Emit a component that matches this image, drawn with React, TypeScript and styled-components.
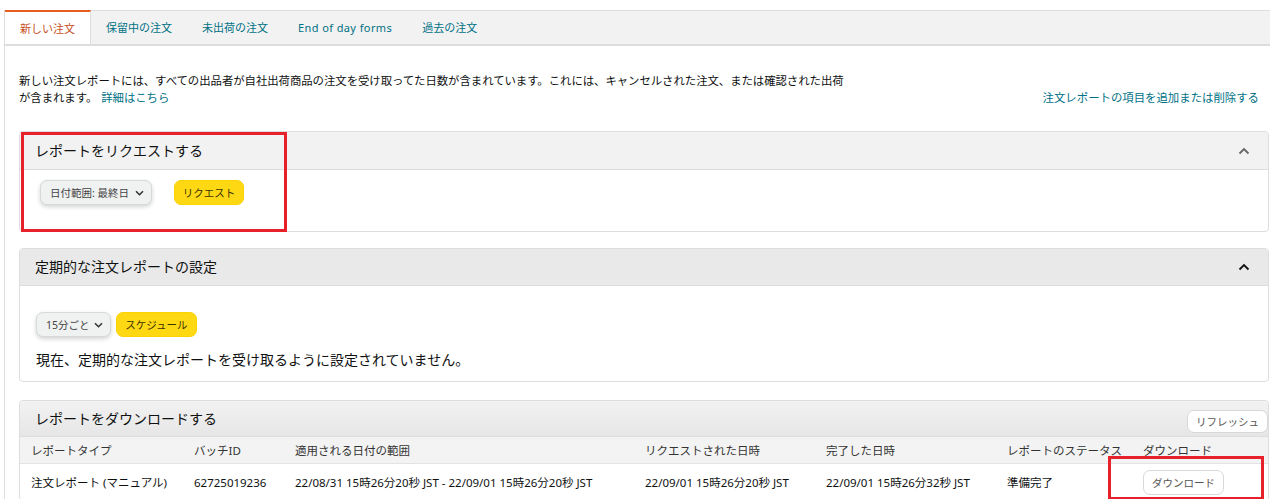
import React from "react";
import styled, { createGlobalStyle } from "styled-components";

const Global = createGlobalStyle`
  html, body { margin: 0; padding: 0; background: #fff; }
  body {
    font-family: "Noto Sans", "Noto Sans CJK JP", sans-serif;
    color: #0f1111;
  }
  * { box-sizing: border-box; }
`;

const Page = styled.div`
  padding: 10px 0 0 4px;
  height: 499px;
  overflow: hidden;
`;

const Frame = styled.div`
  border-left: 1px solid #dddddd;
  height: 100%;
`;

const TabBar = styled.div`
  display: flex;
  height: 36px;
  background: #f2f2f2;
  border-top: 1px solid #dddddd;
  border-bottom: 2px solid #dddddd;
`;

const Tab = styled.div<{ $active?: boolean; $latin?: boolean }>`
  display: flex;
  align-items: center;
  padding: 0 15px;
  margin-top: -1px;
  font-size: 11px;
  line-height: 1;
  letter-spacing: ${(p) => (p.$latin ? "0.4px" : "0")};
  color: ${(p) => (p.$active ? "#c7511f" : "#007185")};
  background: ${(p) => (p.$active ? "#ffffff" : "transparent")};
  border-top: ${(p) => (p.$active ? "2px solid #e35e1f" : "1px solid transparent")};
  border-right: ${(p) => (p.$active ? "1px solid #dddddd" : "none")};
`;

const Content = styled.div`
  padding: 26px 1px 0 14px;
`;

const Intro = styled.div`
  display: flex;
  justify-content: space-between;
  align-items: flex-end;
  margin-bottom: 25px;
`;

const IntroText = styled.p`
  margin: 0;
  font-size: 11.4px;
  line-height: 17px;
  letter-spacing: -0.05px;
`;

const Link = styled.a`
  color: #007185;
  text-decoration: none;
  margin-left: 4px;
`;

const SideLink = styled.a`
  color: #007185;
  text-decoration: none;
  font-size: 11.4px;
  line-height: 17px;
  margin-right: 10px;
`;

const Panel = styled.section<{ $gap: number }>`
  position: relative;
  border: 1px solid #dddddd;
  border-radius: 4px;
  margin-bottom: ${(p) => p.$gap}px;
`;

const PanelHead = styled.div<{ $bg: string; $h: number }>`
  display: flex;
  align-items: center;
  justify-content: space-between;
  height: ${(p) => p.$h}px;
  padding: 0 18px 0 15px;
  background: ${(p) => p.$bg};
  border-bottom: 1px solid #dddddd;
  border-radius: 4px 4px 0 0;
`;

const PanelTitle = styled.h3`
  margin: 0;
  font-size: 14px;
  font-weight: 400;
  line-height: 20px;
  color: #0f1111;
`;

const PanelBody = styled.div<{ $pad: string }>`
  padding: ${(p) => p.$pad};
`;

const Controls = styled.div<{ $gap: number }>`
  display: flex;
  align-items: center;
  gap: ${(p) => p.$gap}px;
`;

const Select = styled.div<{ $w: number }>`
  display: flex;
  align-items: center;
  justify-content: space-between;
  width: ${(p) => p.$w}px;
  height: 25px;
  padding: 0 7px 0 9px;
  background: #f0f2f2;
  border: 1px solid #d5d9d9;
  border-radius: 7px;
  box-shadow: 0 2px 4px rgba(15, 17, 17, 0.18);
  font-size: 10.5px;
  color: #444;
`;

const YellowButton = styled.div<{ $w: number }>`
  display: flex;
  align-items: center;
  justify-content: center;
  width: ${(p) => p.$w}px;
  height: 25px;
  background: #ffd814;
  border: 1px solid #fcd200;
  border-radius: 7px;
  font-size: 10.5px;
  color: #3a3200;
`;

const WhiteButton = styled.div<{ $w: number; $h: number }>`
  display: flex;
  align-items: center;
  justify-content: center;
  width: ${(p) => p.$w}px;
  height: ${(p) => p.$h}px;
  background: #ffffff;
  border: 1px solid #d5d9d9;
  border-radius: 7px;
  font-size: 10.5px;
  color: #555;
`;

const RefreshButton = styled(WhiteButton)`
  align-self: flex-end;
  margin: 0 -18px 3px 0;
`;

const Notice = styled.p`
  margin: 13px 0 0;
  font-size: 14px;
  line-height: 20px;
`;

const Grid = styled.div`
  display: grid;
  grid-template-columns: 163px 101px 350px 181px 181px 136px 1fr;
  padding-left: 11px;
`;

const HeadRow = styled(Grid)`
  height: 27px;
  align-items: center;
  background: #f3f3f3;
  border-bottom: 1px solid #e3e3e3;
  font-size: 11.5px;
  color: #333;
`;

const DataRow = styled(Grid)`
  height: 36px;
  align-items: center;
  font-size: 11.5px;
  color: #0f1111;
`;

const Cell = styled.div`
  white-space: nowrap;
`;

const Annotation = styled.div<{ $l: number; $t: number; $w: number; $h: number }>`
  position: absolute;
  left: ${(p) => p.$l}px;
  top: ${(p) => p.$t}px;
  width: ${(p) => p.$w}px;
  height: ${(p) => p.$h}px;
  border: 3px solid #e8202a;
  pointer-events: none;
`;

const Chevron = ({ color }: { color: string }) => (
  <svg width="12" height="8" viewBox="0 0 12 8">
    <path d="M1.5 6.5 L6 2 L10.5 6.5" fill="none" stroke={color} strokeWidth="1.8" />
  </svg>
);

const Caret = () => (
  <svg width="9" height="6" viewBox="0 0 9 6">
    <path d="M1 1.2 L4.5 4.7 L8 1.2" fill="none" stroke="#333" strokeWidth="1.6" />
  </svg>
);

export default function App() {
  return (
    <>
      <Global />
      <Page>
        <Frame>
          <TabBar>
            <Tab $active>新しい注文</Tab>
            <Tab>保留中の注文</Tab>
            <Tab>未出荷の注文</Tab>
            <Tab $latin>End of day forms</Tab>
            <Tab>過去の注文</Tab>
          </TabBar>
          <Content>
            <Intro>
              <IntroText>
                新しい注文レポートには、すべての出品者が自社出荷商品の注文を受け取ってた日数が含まれています。これには、キャンセルされた注文、または確認された出荷
                <br />
                が含まれます。<Link>詳細はこちら</Link>
              </IntroText>
              <SideLink>注文レポートの項目を追加または削除する</SideLink>
            </Intro>

            <Panel $gap={16}>
              <PanelHead $bg="#f2f2f2" $h={38}>
                <PanelTitle>レポートをリクエストする</PanelTitle>
                <Chevron color="#666" />
              </PanelHead>
              <PanelBody $pad="10px 20px 26px">
                <Controls $gap={22}>
                  <Select $w={112}>
                    <span>日付範囲: 最終日</span>
                    <Caret />
                  </Select>
                  <YellowButton $w={70}>リクエスト</YellowButton>
                </Controls>
              </PanelBody>
              <Annotation $l={1} $t={0} $w={266} $h={100} />
            </Panel>

            <Panel $gap={18}>
              <PanelHead $bg="#e9e9e9" $h={37}>
                <PanelTitle>定期的な注文レポートの設定</PanelTitle>
                <Chevron color="#111" />
              </PanelHead>
              <PanelBody $pad="26px 16px 11px">
                <Controls $gap={5}>
                  <Select $w={75}>
                    <span>15分ごと</span>
                    <Caret />
                  </Select>
                  <YellowButton $w={81}>スケジュール</YellowButton>
                </Controls>
                <Notice>現在、定期的な注文レポートを受け取るように設定されていません。</Notice>
              </PanelBody>
            </Panel>

            <Panel $gap={0}>
              <PanelHead $bg="linear-gradient(#f2f2f2, #e6e6e6)" $h={36}>
                <PanelTitle>レポートをダウンロードする</PanelTitle>
                <RefreshButton $w={81} $h={23}>リフレッシュ</RefreshButton>
              </PanelHead>
              <HeadRow>
                <Cell>レポートタイプ</Cell>
                <Cell>バッチID</Cell>
                <Cell>適用される日付の範囲</Cell>
                <Cell>リクエストされた日時</Cell>
                <Cell>完了した日時</Cell>
                <Cell>レポートのステータス</Cell>
                <Cell>ダウンロード</Cell>
              </HeadRow>
              <DataRow>
                <Cell>注文レポート (マニュアル)</Cell>
                <Cell>62725019236</Cell>
                <Cell>22/08/31 15時26分20秒 JST - 22/09/01 15時26分20秒 JST</Cell>
                <Cell>22/09/01 15時26分20秒 JST</Cell>
                <Cell>22/09/01 15時26分32秒 JST</Cell>
                <Cell>準備完了</Cell>
                <Cell>
                  <WhiteButton $w={81} $h={25}>ダウンロード</WhiteButton>
                </Cell>
              </DataRow>
              <Annotation $l={1088} $t={55} $w={156} $h={44} />
            </Panel>
          </Content>
        </Frame>
      </Page>
    </>
  );
}
